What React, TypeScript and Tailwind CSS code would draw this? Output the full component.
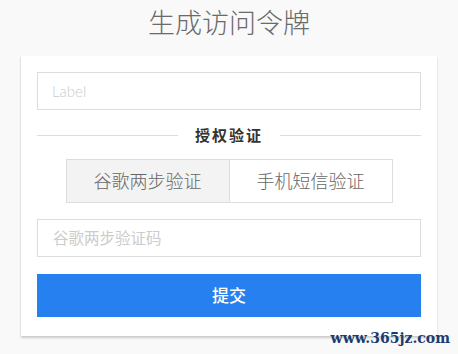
import { useState } from 'react';

const font = { fontFamily: 'Lato, "Noto Sans CJK SC", sans-serif' };

export default function App() {
  const [tab, setTab] = useState<'google' | 'sms'>('google');

  return (
    <div
      className="relative min-h-[354px] w-full bg-[#f9f9f9] text-[#666]"
      style={font}
    >
      <h1 className="pt-[5px] text-center text-[27px] font-light leading-[36px] text-[#6a6a6a]">
        生成访问令牌
      </h1>

      <div className="mx-[21px] mt-[15px] bg-white px-4 pt-4 pb-[19px] shadow-[0_2px_2px_rgba(0,0,0,0.18),-1px_0_1px_rgba(0,0,0,0.03)]">
        <input
          className="block h-[38px] w-full border border-[#ddd] px-[14px] text-[15px] font-light text-[#555] outline-none placeholder:text-[#ccc]"
          placeholder="Label"
        />

        <div className="mt-[15px] mb-[14px] flex h-5 items-center">
          <div className="h-px flex-1 bg-[#ddd]" />
          <span className="px-[17px] text-[15px] font-bold tracking-[2px] text-[#333]">
            授权验证
          </span>
          <div className="h-px flex-1 bg-[#ddd]" />
        </div>

        <div className="mx-auto flex h-[44px] w-[327px] border border-[#ddd]">
          <button
            onClick={() => setTab('google')}
            className={`flex-1 border-r border-[#ddd] text-[18px] font-light text-[#666] ${
              tab === 'google' ? 'bg-[#f3f3f3]' : 'bg-white'
            }`}
          >
            谷歌两步验证
          </button>
          <button
            onClick={() => setTab('sms')}
            className={`flex-1 text-[18px] font-light text-[#666] ${
              tab === 'sms' ? 'bg-[#f3f3f3]' : 'bg-white'
            }`}
          >
            手机短信验证
          </button>
        </div>

        <input
          className="mt-4 block h-[38px] w-full border border-[#ddd] px-[15px] text-[15.5px] text-[#555] outline-none placeholder:text-[#ccc]"
          placeholder={tab === 'google' ? '谷歌两步验证码' : '手机短信验证码'}
        />

        <button className="mt-[17px] block h-[43px] w-full bg-[#2780f0] text-[17px] font-medium text-white">
          提交
        </button>
      </div>

      <span
        className="absolute right-[8px] bottom-[9px] text-[14px] font-bold leading-none text-[#1b3b6f]"
        style={{ fontFamily: '"DejaVu Serif", serif' }}
      >
        www.365jz.com
      </span>
    </div>
  );
}
